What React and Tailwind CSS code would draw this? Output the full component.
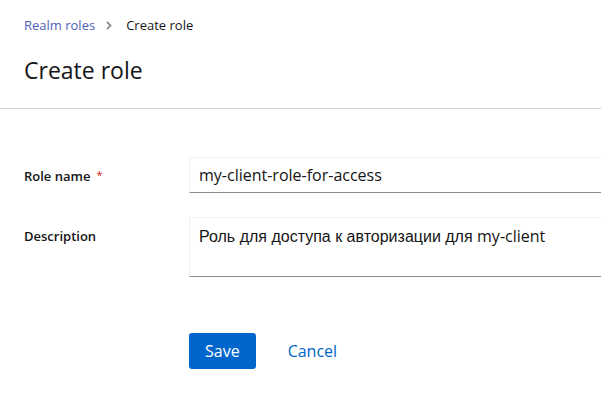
const App = () => {
  return (
    <div className="min-h-screen w-[601px] overflow-hidden bg-white font-['Open_Sans',sans-serif] text-[#151515]">
      {/* page header */}
      <div className="border-b border-[#d2d2d2] px-6 pt-[15px] pb-[20px]">
        <nav className="flex items-center text-[13px] leading-[21px]">
          <a className="text-[#4f5fb8]">Realm roles</a>
          <svg className="ml-[11px] mr-[14px] h-[9px] w-[6px] text-[#8a8d90]" viewBox="0 0 6 9" fill="currentColor">
            <path d="M0.3 1.4 L1.6 0.2 L5.8 4.5 L1.6 8.8 L0.3 7.6 L3.3 4.5 Z" />
          </svg>
          <span>Create role</span>
        </nav>
        <h1 className="mt-[16px] text-[23px] leading-[36px]">Create role</h1>
      </div>

      {/* form */}
      <div className="pt-[48px] pl-6">
        <div className="grid grid-cols-[165px_1fr] gap-y-6">
          <label className="flex h-[36px] items-center pt-[4px] text-[13px] font-semibold">
            Role name
            <span className="ml-[6px] -mt-[4px] text-[11px] font-normal text-[#c9190b]">*</span>
          </label>
          <div className="-mr-[20px] flex h-[36px] items-center border border-[#f0f0f0] border-b-[#8a8d90] px-[9px] text-[16px]">
            my-client-role-for-access
          </div>

          <label className="flex h-[36px] items-center pt-[4px] text-[13px] font-semibold">Description</label>
          <div className="-mr-[20px] h-[60px] border border-[#f0f0f0] border-b-[#8a8d90] px-[9px] pt-[6px] text-[16px] leading-[24px]">
            <span className="font-['Liberation_Sans',sans-serif]">Роль для доступа к авторизации для </span>
            my-client
          </div>
        </div>

        <div className="mt-[56px] ml-[165px] flex items-center gap-[16px]">
          <button className="h-[36px] rounded-[3px] bg-[#0066cc] px-[16px] text-[16px] text-white">Save</button>
          <button className="h-[36px] px-[16px] text-[16px] text-[#0066cc]">Cancel</button>
        </div>
      </div>
    </div>
  );
};

export default App;
